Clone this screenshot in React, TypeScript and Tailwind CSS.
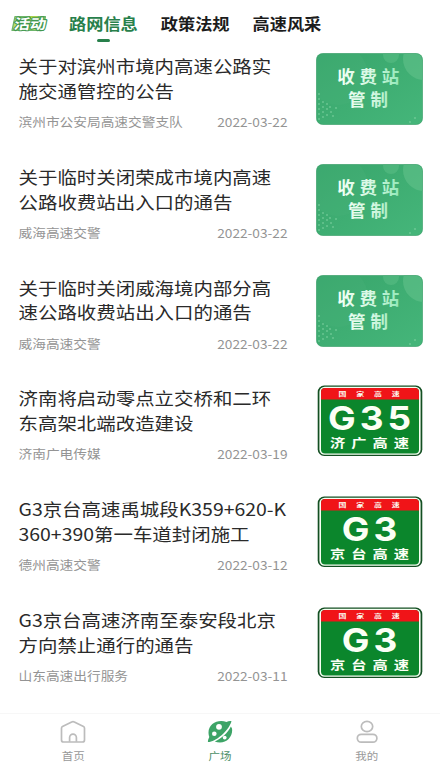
type Notice = {
  id: number;
  lines: string[];
  source: string;
  date: string;
  road?: { code: string; name: string };
};

const notices: Notice[] = [
  { id: 1, lines: ["关于对滨州市境内高速公路实", "施交通管控的公告"], source: "滨州市公安局高速交警支队", date: "2022-03-22" },
  { id: 2, lines: ["关于临时关闭荣成市境内高速", "公路收费站出入口的通告"], source: "威海高速交警", date: "2022-03-22" },
  { id: 3, lines: ["关于临时关闭威海境内部分高", "速公路收费站出入口的通告"], source: "威海高速交警", date: "2022-03-22" },
  { id: 4, lines: ["济南将启动零点立交桥和二环", "东高架北端改造建设"], source: "济南广电传媒", date: "2022-03-19", road: { code: "G35", name: "济广高速" } },
  { id: 5, lines: ["G3京台高速禹城段K359+620-K", "360+390第一车道封闭施工"], source: "德州高速交警", date: "2022-03-12", road: { code: "G3", name: "京台高速" } },
  { id: 6, lines: ["G3京台高速济南至泰安段北京", "方向禁止通行的通告"], source: "山东高速出行服务", date: "2022-03-11", road: { code: "G3", name: "京台高速" } },
];

const tabs = ["路网信息", "政策法规", "高速风采"];

// Dotted triangle in the lower left corner of the toll card
const dots = [
  [3, 41], [3, 46], [7, 49], [3, 51], [11, 51], [7, 54], [14, 54], [3, 56], [11, 56], [20, 55],
  [7, 59], [15, 59], [3, 61], [11, 62], [17, 63], [7, 64], [3, 66], [94, 69], [99, 65],
];

function TollCard() {
  return (
    <svg width="107" height="72" viewBox="0 0 107 72" className="block">
      <defs>
        <linearGradient id="card" x1="0" y1="0" x2="1" y2="1">
          <stop offset="0" stopColor="#38a56b" />
          <stop offset="1" stopColor="#45b67a" />
        </linearGradient>
        <linearGradient id="cardText" gradientUnits="userSpaceOnUse" x1="22" y1="0" x2="84" y2="0">
          <stop offset="0" stopColor="#f2fff6" />
          <stop offset="0.55" stopColor="#d6f7e2" />
          <stop offset="1" stopColor="#92e8b8" />
        </linearGradient>
        <clipPath id="cardClip">
          <rect x="0.5" y="0.5" width="106" height="71" rx="6" />
        </clipPath>
      </defs>
      <g clipPath="url(#cardClip)">
        <rect width="107" height="72" fill="url(#card)" />
        <circle cx="22" cy="22" r="30" fill="#4db37d" opacity="0.25" />
        <circle cx="75" cy="2" r="8" fill="#6cc893" opacity="0.35" />
        <circle cx="108" cy="6" r="21" fill="#6cc893" opacity="0.45" />
        {dots.map(([x, y]) => (
          <circle key={`${x}-${y}`} cx={x} cy={y} r="0.8" fill="#86d6a6" />
        ))}
      </g>
      <rect x="0.5" y="0.5" width="106" height="71" rx="6" fill="none" stroke="#319a60" strokeOpacity="0.6" />
      <g fill="url(#cardText)" fontFamily="'Noto Sans CJK SC', sans-serif" fontWeight="700" fontSize="17.5">
        <text x="21.3" y="29.8" textLength="62">收费站</text>
        <text x="32" y="53" textLength="40">管制</text>
      </g>
    </svg>
  );
}

function RoadSign({ code, name }: { code: string; name: string }) {
  return (
    <svg width="107" height="72" viewBox="0 0 107 72" className="block">
      <rect x="1.7" y="0.5" width="104.6" height="70.5" rx="6.5" fill="#134f22" />
      <rect x="3.4" y="1.7" width="101.2" height="68.1" rx="5.3" fill="#f6fff2" />
      <rect x="5" y="3" width="98" height="65.5" rx="4" fill="#0b862c" />
      <path d="M5 14.500V7a4 4 0 0 1 4-4h90a4 4 0 0 1 4 4v7.500z" fill="#f01418" />
      <g fill="#fbfff5" textAnchor="middle" fontFamily="'Noto Sans CJK SC', sans-serif">
        <g transform="translate(53 11.2) scale(1.2 0.85)">
          <text fontSize="6.6" fontWeight="700" letterSpacing="8.2" x="4.1">国家高速</text>
        </g>
        <g transform="translate(53.5 44.5) scale(1.12 1)">
          <text fontSize="33" fontWeight="700" fontFamily="Inter, sans-serif" letterSpacing="3.6" x="1.8">{code}</text>
        </g>
        <g transform="translate(53.5 63) scale(1.25 1)">
          <text fontSize="12.2" fontWeight="700" letterSpacing="4.8" x="2.4">{name}</text>
        </g>
      </g>
    </svg>
  );
}

function NoticeRow({ notice }: { notice: Notice }) {
  return (
    <li className="flex h-[110.8px] justify-between pr-[17px] pl-[18.5px]">
      <div className="w-[269px] pt-px">
        <h2 className="text-[19.45px] leading-[24.8px] whitespace-nowrap text-[#2a2a2a]">
          {notice.lines.map((line) => (
            <span key={line} className="block scale-y-90">{line}</span>
          ))}
        </h2>
        <div className="mt-[8.5px] flex scale-y-90 justify-between text-[13.7px] leading-5 text-[#949494]">
          <span>{notice.source}</span>
          <span>{notice.date}</span>
        </div>
      </div>
      {notice.road ? <RoadSign {...notice.road} /> : <TollCard />}
    </li>
  );
}

function ActivityBadge() {
  return (
    <svg width="38" height="24" viewBox="0 0 38 24">
      <path d="M5 4.500h30.500L33 18.500H2z" fill="#b9dc6a" stroke="#6db56a" strokeWidth="1.2" strokeLinejoin="round" />
      <path d="M6 5l6 1-4 4zM18 4.500h10l-3 3h-8zM3 17l3-4 3 4z" fill="#e2ea2c" />
      <g transform="translate(3.6 17) skewX(-9) scale(1.03 0.9)">
        <text
          fontFamily="'Noto Sans CJK SC', sans-serif"
          fontSize="15.5"
          fontWeight="700"
          fill="#fff"
          stroke="#429850"
          strokeWidth="2.4"
          strokeLinejoin="round"
          paintOrder="stroke"
        >
          活动
        </text>
      </g>
    </svg>
  );
}

function HomeIcon() {
  return (
    <svg width="26" height="24" viewBox="0 0 26 24" fill="none" stroke="#bcbcbc" strokeWidth="1.7" strokeLinejoin="round">
      <path d="M1.500 8.300q0-1.200 1-1.700l9.200-4.600q1.300-.6 2.600 0l9.200 4.600q1 .5 1 1.700V20q0 2-2 2h-19q-2 0-2-2z" />
      <path d="M9.600 21.800v-4.300a3.400 3.400 0 0 1 6.800 0v4.300" />
    </svg>
  );
}

function PlazaIcon() {
  return (
    <svg width="26" height="24" viewBox="0 0 26 24">
      <path d="M24.500 1.200C22.800.800 20.900 1.400 19.500 2 11.500-1.300 1.500 3.500 1.500 12.500c0 1.900.4 3.300.8 4.500-.9 1.900-1.700 4-1.300 5 6.500.4 20.500-10.500 23.500-20.800z" fill="#3da467" />
      <path d="M25 8.500c1.200 7-4.400 14-12 14-2 0-3.700-.3-5.200-1C14.500 18.500 21 12.500 23.900 6.400z" fill="#3da467" />
      <g fill="#fff">
        <circle cx="12" cy="6.800" r="2.900" />
        <circle cx="7.300" cy="13.700" r="2.300" />
        <circle cx="17.700" cy="17.600" r="1.900" />
      </g>
    </svg>
  );
}

function UserIcon() {
  return (
    <svg width="26" height="24" viewBox="0 0 26 24" fill="none" stroke="#bcbcbc" strokeWidth="1.7">
      <ellipse cx="13" cy="6.5" rx="5.7" ry="5.1" />
      <rect x="3.3" y="14.3" width="19.6" height="7.9" rx="3.95" />
    </svg>
  );
}

const navItems = [
  { label: "首页", icon: <HomeIcon />, active: false },
  { label: "广场", icon: <PlazaIcon />, active: true },
  { label: "我的", icon: <UserIcon />, active: false },
];

export default function App() {
  return (
    <div className="flex h-[770px] w-[440px] flex-col overflow-hidden bg-white font-['Noto_Sans_CJK_SC',sans-serif]">
      {/* Tabs */}
      <header className="flex h-[53px] shrink-0 items-start pt-3 pl-[10px]">
        <ActivityBadge />
        <nav className="ml-[21px] flex gap-[23px]">
          {tabs.map((tab, i) => (
            <button key={tab} className="flex flex-col items-center text-[17.2px] leading-[23px] font-bold">
              <span className={i === 0 ? "scale-y-90 text-[#28804b]" : "scale-y-90 text-[#1c1c1c]"}>{tab}</span>
              {i === 0 && <span className="mt-1 h-[3px] w-[13px] rounded-full bg-[#28804b]" />}
            </button>
          ))}
        </nav>
      </header>

      {/* Notices */}
      <ul className="min-h-0 flex-1 overflow-hidden">
        {notices.map((notice) => (
          <NoticeRow key={notice.id} notice={notice} />
        ))}
      </ul>

      {/* Bottom bar */}
      <footer className="grid h-[57px] shrink-0 grid-cols-3 border-t border-[#f7f7f7] pt-[6px]">
        {navItems.map((item) => (
          <button key={item.label} className="flex flex-col items-center">
            {item.icon}
            <span className={item.active ? "mt-[2px] scale-y-90 text-[11.5px] leading-[18px] text-[#4c9068]" : "mt-[2px] scale-y-90 text-[11.5px] leading-[18px] text-[#999]"}>
              {item.label}
            </span>
          </button>
        ))}
      </footer>
    </div>
  );
}
